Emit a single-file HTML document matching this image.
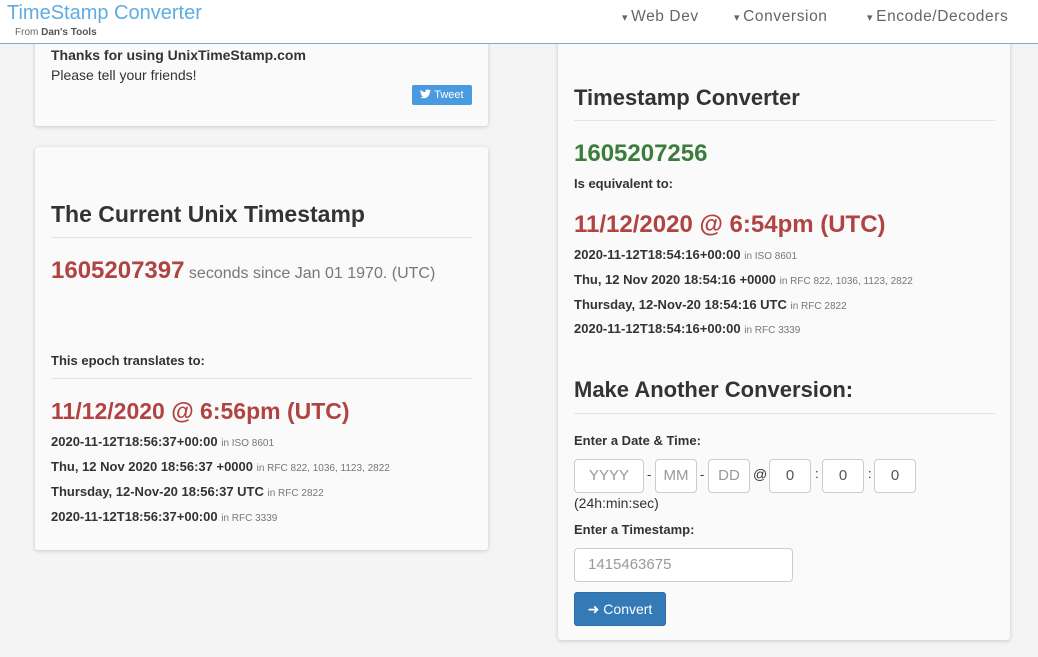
<!DOCTYPE html>
<html><head><meta charset="utf-8"><style>
*{margin:0;padding:0;box-sizing:border-box}
body{width:1038px;height:657px;overflow:hidden;background:#f4f4f4;font-family:"Liberation Sans",sans-serif;color:#333;position:relative}
.a{position:absolute;white-space:nowrap}
.hdr{position:absolute;left:0;top:0;width:1038px;height:44px;background:#fff;border-bottom:1px solid #7fa9c9;z-index:5}
.card{position:absolute;background:#fafafa;border-radius:3px;box-shadow:0 1px 4px rgba(0,0,0,.18)}
b{font-weight:bold}
.s{font-size:10px;color:#777;font-weight:normal}
.hr{position:absolute;height:1px;background:#e4e4e4}
.in{position:absolute;height:34px;border:1px solid #ccc;border-radius:4px;background:#fff;font-size:15px;color:#999;text-align:center;line-height:32px}
.nav{font-size:15.5px;color:#666;letter-spacing:.6px;top:8px}
.nav i{font-style:normal;font-size:11px;margin-right:3px}
</style></head><body>
<div class="hdr">
<div class="a" style="left:7px;top:2px;font-size:20px;color:#5dade2">TimeStamp Converter</div>
<div class="a" style="left:15px;top:27px;font-size:10px;color:#666">From <b style="color:#555">Dan's Tools</b></div>
<div class="a nav" style="left:622px"><i>▾</i>Web Dev</div>
<div class="a nav" style="left:734px"><i>▾</i>Conversion</div>
<div class="a nav" style="left:867px"><i>▾</i>Encode/Decoders</div>
</div>

<div class="card" style="left:35px;top:20px;width:453px;height:106px"></div>
<div class="a" style="left:51px;top:47px;font-size:14px;font-weight:bold">Thanks for using UnixTimeStamp.com</div>
<div class="a" style="left:51px;top:67px;font-size:14px">Please tell your friends!</div>
<div class="a" style="left:412px;top:85px;width:60px;height:20px;background:#4a9ae0;border-radius:2px;color:#fff;font-size:11px;line-height:20px;text-align:center">
<svg width="11" height="10" viewBox="0 0 24 20" style="vertical-align:-1px"><path fill="#fff" d="M24 2.4a10 10 0 0 1-2.8.8A5 5 0 0 0 23.3.4a10 10 0 0 1-3.1 1.2A4.9 4.9 0 0 0 11.8 6 14 14 0 0 1 1.7.9a4.9 4.9 0 0 0 1.5 6.6A4.9 4.9 0 0 1 1 6.9a4.9 4.9 0 0 0 3.9 4.8 5 5 0 0 1-2.2.1 4.9 4.9 0 0 0 4.6 3.4A9.9 9.9 0 0 1 0 17.2 14 14 0 0 0 7.5 19.4c9.1 0 14-7.5 14-14v-.6A10 10 0 0 0 24 2.4z"/></svg> Tweet</div>

<div class="card" style="left:35px;top:147px;width:453px;height:403px"></div>
<div class="a" style="left:51px;top:201px;font-size:23px;font-weight:bold">The Current Unix Timestamp</div>
<div class="hr" style="left:51px;top:237px;width:421px"></div>
<div class="a" style="left:51px;top:257px;font-size:16px;color:#777"><b style="font-size:24px;color:#b04442">1605207397</b> seconds since Jan 01 1970. (UTC)</div>
<div class="a" style="left:51px;top:353px;font-size:13px;font-weight:bold">This epoch translates to:</div>
<div class="hr" style="left:51px;top:378px;width:421px"></div>
<div class="a" style="left:51px;top:398px;font-size:23px;font-weight:bold;color:#b04442">11/12/2020 @ 6:56pm (UTC)</div>
<div class="a" style="left:51px;top:434px;font-size:13px;font-weight:bold">2020-11-12T18:56:37+00:00 <span class="s">in ISO 8601</span></div>
<div class="a" style="left:51px;top:459px;font-size:13px;font-weight:bold">Thu, 12 Nov 2020 18:56:37 +0000 <span class="s">in RFC 822, 1036, 1123, 2822</span></div>
<div class="a" style="left:51px;top:484px;font-size:13px;font-weight:bold">Thursday, 12-Nov-20 18:56:37 UTC <span class="s">in RFC 2822</span></div>
<div class="a" style="left:51px;top:509px;font-size:13px;font-weight:bold">2020-11-12T18:56:37+00:00 <span class="s">in RFC 3339</span></div>

<div class="card" style="left:558px;top:20px;width:452px;height:620px"></div>
<div class="a" style="left:574px;top:85px;font-size:22px;font-weight:bold">Timestamp Converter</div>
<div class="hr" style="left:574px;top:120px;width:421px"></div>
<div class="a" style="left:574px;top:140px;font-size:24px;font-weight:bold;color:#3c7d3c">1605207256</div>
<div class="a" style="left:574px;top:176px;font-size:13px;font-weight:bold">Is equivalent to:</div>
<div class="a" style="left:574px;top:211px;font-size:24px;font-weight:bold;color:#b04442">11/12/2020 @ 6:54pm (UTC)</div>
<div class="a" style="left:574px;top:247px;font-size:13px;font-weight:bold">2020-11-12T18:54:16+00:00 <span class="s">in ISO 8601</span></div>
<div class="a" style="left:574px;top:272px;font-size:13px;font-weight:bold">Thu, 12 Nov 2020 18:54:16 +0000 <span class="s">in RFC 822, 1036, 1123, 2822</span></div>
<div class="a" style="left:574px;top:297px;font-size:13px;font-weight:bold">Thursday, 12-Nov-20 18:54:16 UTC <span class="s">in RFC 2822</span></div>
<div class="a" style="left:574px;top:321px;font-size:13px;font-weight:bold">2020-11-12T18:54:16+00:00 <span class="s">in RFC 3339</span></div>
<div class="a" style="left:574px;top:377px;font-size:22px;font-weight:bold">Make Another Conversion:</div>
<div class="hr" style="left:574px;top:413px;width:421px"></div>
<div class="a" style="left:574px;top:433px;font-size:13px;font-weight:bold">Enter a Date &amp; Time:</div>
<div class="in" style="left:574px;top:459px;width:70px">YYYY</div>
<div class="a" style="left:647px;top:467px;font-size:13px">-</div>
<div class="in" style="left:655px;top:459px;width:42px">MM</div>
<div class="a" style="left:700px;top:467px;font-size:13px">-</div>
<div class="in" style="left:708px;top:459px;width:42px">DD</div>
<div class="a" style="left:753px;top:466px;font-size:14px">@</div>
<div class="in" style="left:769px;top:459px;width:42px;color:#555">0</div>
<div class="a" style="left:815px;top:466px;font-size:13px">:</div>
<div class="in" style="left:822px;top:459px;width:42px;color:#555">0</div>
<div class="a" style="left:868px;top:466px;font-size:13px">:</div>
<div class="in" style="left:874px;top:459px;width:42px;color:#555">0</div>
<div class="a" style="left:574px;top:495px;font-size:14px">(24h:min:sec)</div>
<div class="a" style="left:574px;top:522px;font-size:13px;font-weight:bold">Enter a Timestamp:</div>
<div class="in" style="left:574px;top:548px;width:219px;text-align:left;padding-left:13px">1415463675</div>
<div class="a" style="left:574px;top:592px;width:92px;height:34px;background:#337ab7;border:1px solid #2e6da4;border-radius:3px;color:#fff;font-size:14px;line-height:32px;text-align:center">➜ Convert</div>
</body></html>
